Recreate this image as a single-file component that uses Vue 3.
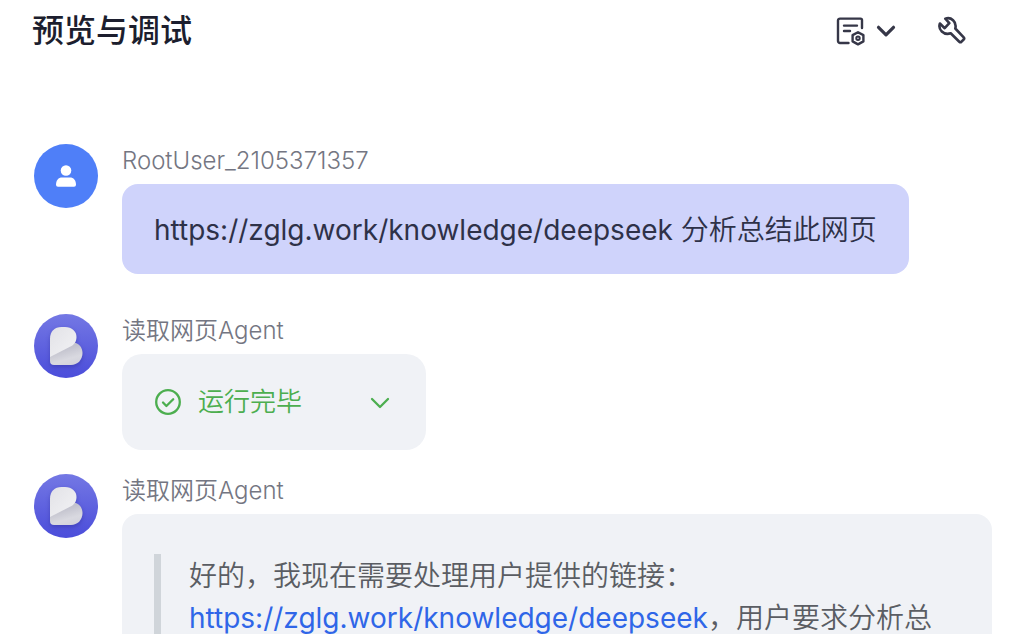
<script setup>
import { ref } from 'vue'

const title = '预览与调试'
const agentName = '读取网页Agent'
const link = 'https://zglg.work/knowledge/deepseek'
const expanded = ref(false)
</script>

<template>
  <div class="panel">
    <header class="header">
      <h1 class="title">{{ title }}</h1>
      <div class="tools">
        <button class="tool memory" type="button" aria-label="记忆设置">
          <svg width="30" height="30" viewBox="0 0 30 30" fill="none" stroke="currentColor" stroke-width="2.4" stroke-linecap="round" stroke-linejoin="round">
            <path d="M12.500 27H4a2 2 0 0 1-2-2V4.600a2 2 0 0 1 2-2h20.500a1.500 1.500 0 0 1 1.500 1.500V12" />
            <path d="M8 9.600h13M8 15h6" />
            <path d="M22 16.200l5.400 2.900v6.300L22 28.400l-5.400-3v-6.300z" />
            <circle cx="22" cy="22.300" r="1.700" stroke-width="2" />
          </svg>
          <svg width="20" height="14" viewBox="0 0 20 14" fill="none" stroke="currentColor" stroke-width="3.200" stroke-linecap="round" stroke-linejoin="round">
            <path d="M2.500 3.300l7.500 7.500 7.500-7.500" />
          </svg>
        </button>
        <button class="tool" type="button" aria-label="调试">
          <svg width="30" height="30" viewBox="0 0 30 30" fill="none" stroke="currentColor" stroke-width="2.600" stroke-linejoin="round">
            <path d="M9.300 2.700C15 0.600 21 5.500 19.300 12.500L27.700 21.300Q28.700 22.400 27.700 23.500L25.500 25.700Q24.400 26.700 23.300 25.700L14.700 17.300C7.500 19.500 1.800 13.500 3.900 7.500L8.700 12.200 13.300 7.200z" />
          </svg>
        </button>
      </div>
    </header>

    <main class="chat">
      <article class="message">
        <div class="avatar user">
          <svg width="20" height="22" viewBox="0 0 20 22" fill="#fff">
            <circle cx="10" cy="5.500" r="5.300" />
            <path d="M0 19.800C0 15.200 2.500 12.500 6 12.500h8c3.500 0 6 2.700 6 7.300a2 2 0 0 1-2 2H2a2 2 0 0 1-2-2z" />
          </svg>
        </div>
        <div class="body">
          <div class="name">RootUser_2105371357</div>
          <div class="bubble mine"><span class="url">{{ link }}</span> 分析总结此网页</div>
        </div>
      </article>

      <article class="message">
        <div class="avatar agent">
          <svg class="mark" viewBox="0 0 64 64">
            <defs>
              <linearGradient id="mark-back" x1="0.400" y1="0.300" x2="0.700" y2="1">
                <stop offset="0" stop-color="#c3c3ce" />
                <stop offset="0.600" stop-color="#d9d9e0" />
                <stop offset="1" stop-color="#d3d3dc" />
              </linearGradient>
              <linearGradient id="mark-front" x1="0" y1="0" x2="1" y2="1">
                <stop offset="0" stop-color="#e2e2e7" />
                <stop offset="1" stop-color="#f3f3f5" />
              </linearGradient>
            </defs>
            <path d="M16 42L40 28.500C45 29.500 48.500 33.500 48.500 39 48.500 46 43.500 51 37 51H20Q16 51 16 47z" fill="url(#mark-back)" />
            <path d="M16 43V24.500C16 17.500 20.500 13 27.500 13H31C38 13 42.500 17.500 42.500 23 42.500 27.500 40.500 30.500 36 32.800z" fill="url(#mark-front)" />
          </svg>
        </div>
        <div class="body">
          <div class="name">{{ agentName }}</div>
          <button class="status" type="button" :aria-expanded="expanded" @click="expanded = !expanded">
            <svg width="28" height="28" viewBox="0 0 28 28" fill="none" stroke="currentColor" stroke-width="2.300" stroke-linecap="round" stroke-linejoin="round">
              <circle cx="14" cy="14" r="11.800" />
              <path d="M9 14.500l3.400 3.500 6.800-6.800" />
            </svg>
            <span class="status-text">运行完毕</span>
            <svg width="20" height="14" viewBox="0 0 20 14" fill="none" stroke="currentColor" stroke-width="2.300" stroke-linecap="round" stroke-linejoin="round">
              <path d="M2 4l8 8 8-8" />
            </svg>
          </button>
        </div>
      </article>

      <article class="message">
        <div class="avatar agent">
          <svg class="mark" viewBox="0 0 64 64">
            <path d="M16 42L40 28.500C45 29.500 48.500 33.500 48.500 39 48.500 46 43.500 51 37 51H20Q16 51 16 47z" fill="url(#mark-back)" />
            <path d="M16 43V24.500C16 17.500 20.500 13 27.500 13H31C38 13 42.500 17.500 42.500 23 42.500 27.500 40.500 30.500 36 32.800z" fill="url(#mark-front)" />
          </svg>
        </div>
        <div class="body">
          <div class="name">{{ agentName }}</div>
          <div class="bubble reply">
            <blockquote class="quote">
              好的，我现在需要处理用户提供的链接：<br /><a class="url" :href="link">{{ link }}</a>，用户要求分析总
            </blockquote>
          </div>
        </div>
      </article>
    </main>
  </div>
</template>

<style>
body {
  margin: 0;
  background: #fff;
}
</style>

<style scoped>
.panel {
  box-sizing: border-box;
  height: 100vh;
  overflow: hidden;
  font-family: Inter, "Noto Sans CJK SC", sans-serif;
  font-weight: 350;
  color: #1c1e2e;
}
.header {
  display: flex;
  align-items: center;
  justify-content: space-between;
  height: 60px;
  padding: 1px 44px 0 32px;
}
.title {
  margin: 0;
  font-size: 32px;
  line-height: 48px;
  font-weight: 500;
}
.tools {
  display: flex;
  gap: 40px;
}
button {
  border: 0;
  background: none;
  padding: 0;
  font: inherit;
  cursor: pointer;
}
.tool {
  display: flex;
  align-items: center;
  gap: 10px;
  color: #363748;
}
.chat {
  padding: 83px 18px 0 34px;
}
.message {
  display: flex;
  gap: 24px;
  margin-bottom: 40px;
}
.message:has(.status) {
  margin-bottom: 24px;
}
.avatar {
  flex: none;
  display: flex;
  align-items: center;
  justify-content: center;
  width: 64px;
  height: 64px;
  border-radius: 50%;
}
.user {
  background: #4f7ff8;
}
.agent {
  background: linear-gradient(#7478e4, #4b4dda);
}
.mark {
  width: 64px;
  height: 64px;
  filter: drop-shadow(0 2px 2px rgba(30, 30, 130, 0.35));
}
.body {
  flex: 1;
  min-width: 0;
  display: flex;
  flex-direction: column;
  align-items: flex-start;
}
.name {
  margin-bottom: 6px;
  font-size: 24px;
  line-height: 34px;
  color: #747682;
}
.bubble {
  box-sizing: border-box;
  border-radius: 16px;
  font-size: 28px;
  line-height: 42px;
}
.url {
  font-weight: 400;
}
.mine {
  padding: 25px 32px 23px;
  background: #cfd3fb;
  color: #2e3148;
}
.status {
  display: flex;
  align-items: center;
  width: 304px;
  padding: 28px 36px 28px 32px;
  border-radius: 20px;
  background: #f0f2f6;
  color: #4cae4f;
  font-size: 26px;
  line-height: 40px;
}
.status-text {
  flex: 1;
  margin-left: 16px;
  text-align: left;
}
.reply {
  width: 100%;
  padding: 40px 32px;
  background: #f0f2f6;
}
.quote {
  margin: 0;
  padding: 1px 0 42px 28px;
  border-left: 7px solid #d0d5da;
  color: #5a5d63;
}
.quote a {
  color: #2f66e8;
  text-decoration: none;
}
</style>
